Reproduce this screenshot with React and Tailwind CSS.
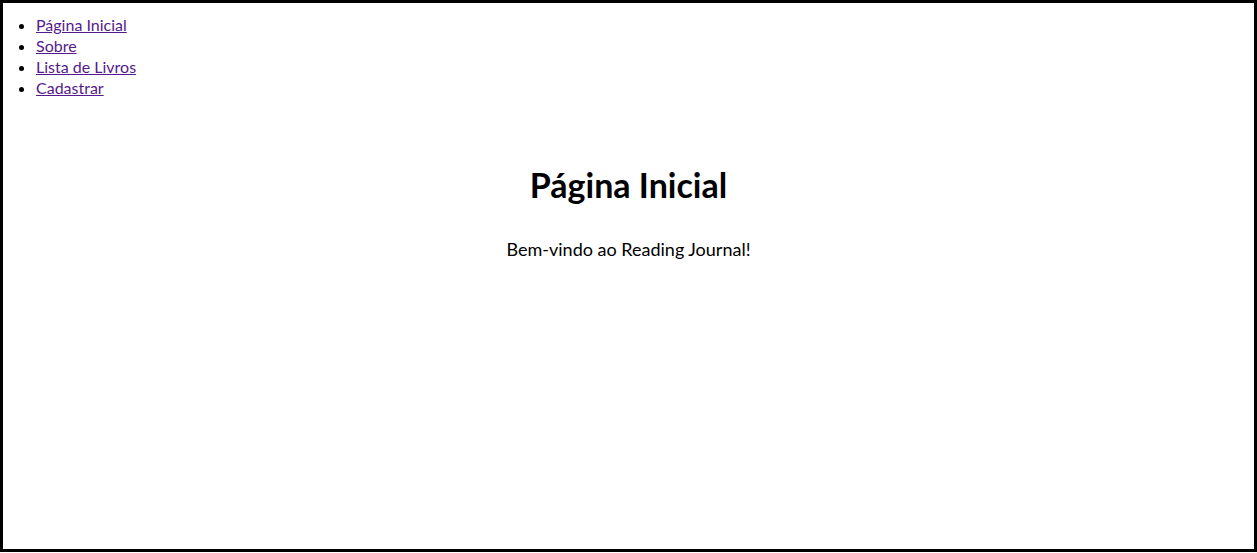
import React from 'react';

const links = ['Página Inicial', 'Sobre', 'Lista de Livros', 'Cadastrar'];

const App = () => {
  return (
    <div className="h-[552px] w-full border-[3px] border-black bg-white text-black font-['Lato','Noto_Sans',sans-serif]">
      <nav>
        <ul className="list-disc pl-[33px] pt-[11px] text-[16px] leading-[21px]">
          {links.map((label) => (
            <li key={label}>
              <a href="#" className="text-[#551a8b] underline">{label}</a>
            </li>
          ))}
        </ul>
      </nav>

      <main className="text-center pt-[66px]">
        <h1 className="text-[34px] leading-[42px] font-bold">Página Inicial</h1>
        <p className="mt-[32px] text-[18px] leading-[22px]">Bem-vindo ao Reading Journal!</p>
      </main>
    </div>
  );
};

export default App;
